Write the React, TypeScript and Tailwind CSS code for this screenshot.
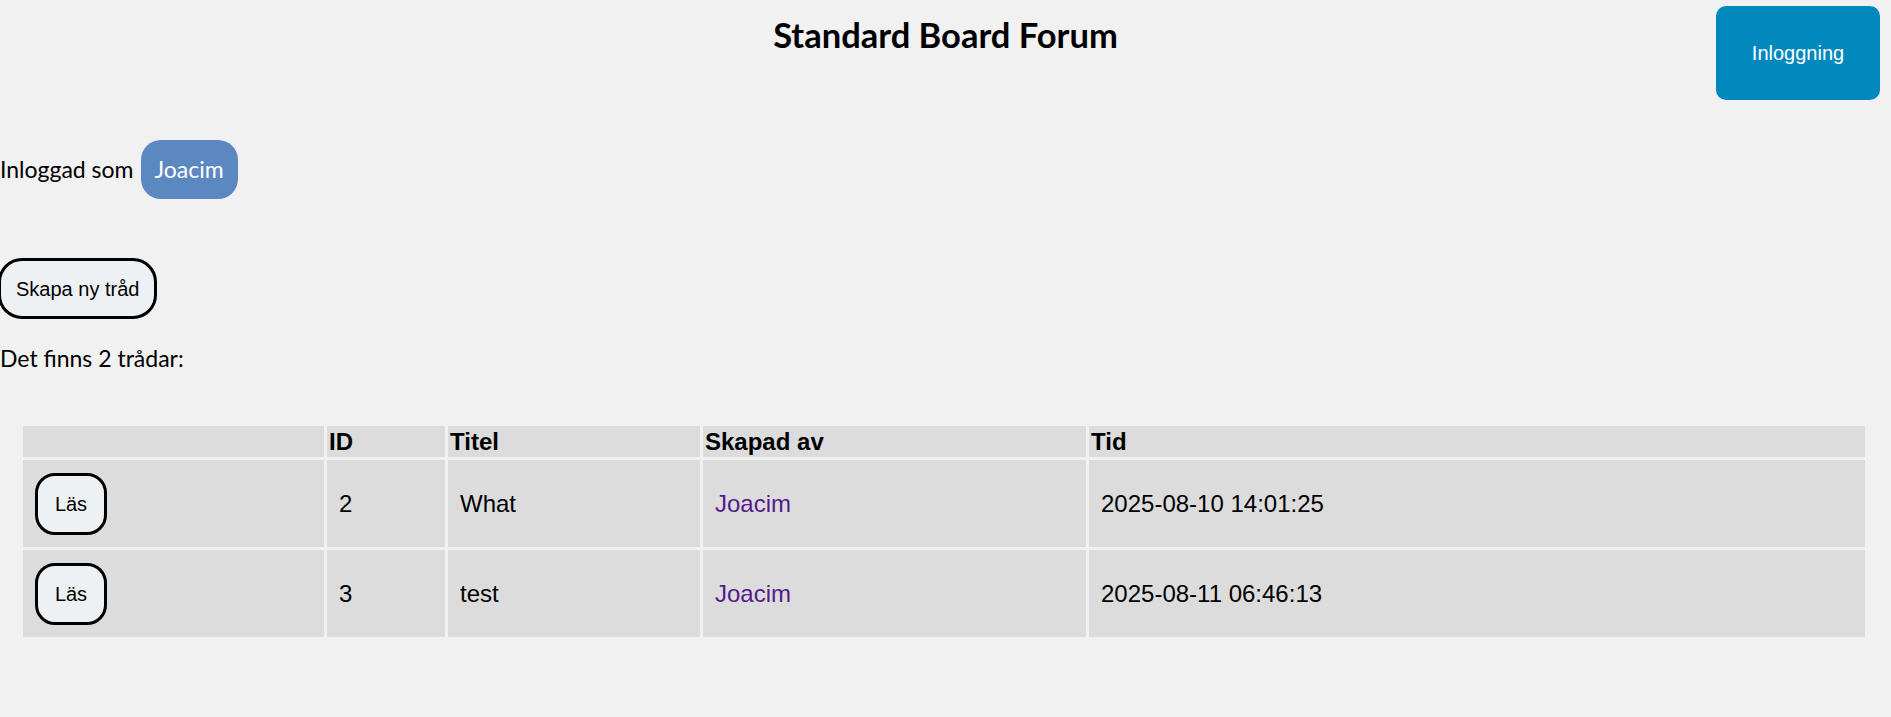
import React from "react"

interface Thread {
  id: number
  title: string
  author: string
  created: string
}

const threads: Thread[] = [
  { id: 2, title: "What", author: "Joacim", created: "2025-08-10 14:01:25" },
  { id: 3, title: "test", author: "Joacim", created: "2025-08-11 06:46:13" },
]

export default function App() {
  return (
    <div className="min-h-screen bg-[#f1f1f1] text-black font-['Lato','Noto_Sans',sans-serif] text-[23px]">
      {/* header */}
      <div className="grid grid-cols-[1fr_auto_1fr] items-start">
        <div />
        <h1 className="mt-[14px] text-[34.5px] leading-[42px] font-bold">Standard Board Forum</h1>
        <div className="flex justify-end">
          <button className="mt-[6px] mr-[11px] w-[164px] h-[94px] rounded-[10px] bg-[#0189bd] text-white text-[20px] font-['Liberation_Sans',Arial,sans-serif]">
            Inloggning
          </button>
        </div>
      </div>

      <div className="mt-[40px] flex items-center leading-[29px]">
        <span>Inloggad som</span>
        <span className="ml-[7px] rounded-[20px] bg-[#5c88c1] px-[14px] py-[15px] text-white">Joacim</span>
      </div>

      <button className="mt-[59px] -ml-[2px] h-[61px] rounded-[24px] border-[3px] border-black bg-[#eef1f3] px-[15px] text-[20px] font-['Liberation_Sans',Arial,sans-serif]">
        Skapa ny tråd
      </button>

      <p className="mt-[25px] leading-[29px]">Det finns 2 trådar:</p>

      <table className="mt-[50px] ml-[20px] w-[1848px] table-fixed border-separate border-spacing-[3px] font-['Liberation_Sans',Arial,sans-serif] text-[24px] text-left">
        <thead>
          <tr className="bg-[#dcdcdc]">
            <th className="w-[301px] px-[2px] py-[1.5px] leading-[28px]"></th>
            <th className="w-[118px] px-[2px] py-[1.5px] leading-[28px]">ID</th>
            <th className="w-[252px] px-[2px] py-[1.5px] leading-[28px]">Titel</th>
            <th className="w-[383px] px-[2px] py-[1.5px] leading-[28px]">Skapad av</th>
            <th className="w-[776px] px-[2px] py-[1.5px] leading-[28px]">Tid</th>
          </tr>
        </thead>
        <tbody>
          {threads.map((t) => (
            <tr key={t.id} className="bg-[#dcdcdc] h-[87px]">
              <td className="pl-[12px] align-middle">
                <button className="w-[72px] h-[62px] rounded-[20px] border-[3px] border-black bg-[#eef1f3] text-[20px]">
                  Läs
                </button>
              </td>
              <td className="pl-[12px] align-middle">{t.id}</td>
              <td className="pl-[12px] align-middle">{t.title}</td>
              <td className="pl-[12px] align-middle">
                <a href="#" className="text-[#551a8b]">{t.author}</a>
              </td>
              <td className="pl-[12px] align-middle">{t.created}</td>
            </tr>
          ))}
        </tbody>
      </table>
    </div>
  )
}
